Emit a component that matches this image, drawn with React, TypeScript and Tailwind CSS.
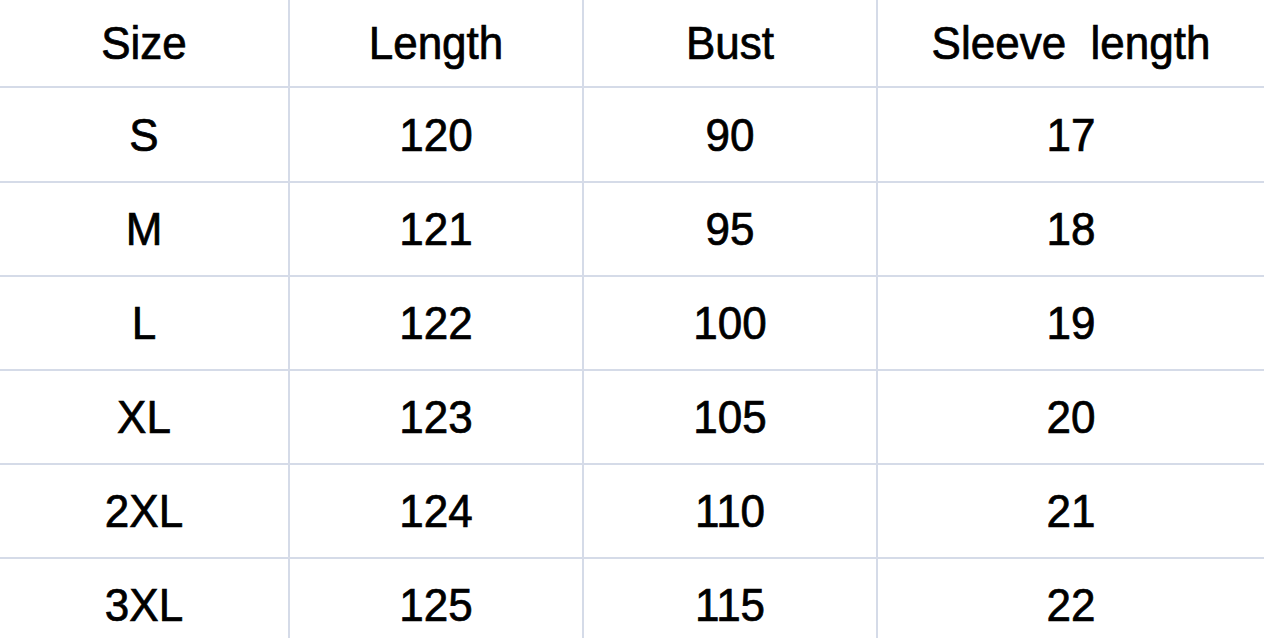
const headers = ["Size", "Length", "Bust", "Sleeve\u00a0 length"];

const rows = [
  ["S", "120", "90", "17"],
  ["M", "121", "95", "18"],
  ["L", "122", "100", "19"],
  ["XL", "123", "105", "20"],
  ["2XL", "124", "110", "21"],
  ["3XL", "125", "115", "22"],
];

export default function App() {
  return (
    <div className="w-[1264px] h-[638px] overflow-hidden bg-white">
      <div
        className="grid grid-cols-[288px_292px_292px_1fr] grid-rows-[86px_93px_92px_92px_92px_92px_92px] gap-[2px] bg-[#d5dbe8] text-black text-[44px] leading-none [-webkit-text-stroke:0.7px_black]"
        style={{ fontFamily: '"Liberation Sans", Arial, sans-serif' }}
      >
        {headers.map((h) => (
          <div key={h} className="flex items-center justify-center bg-white">
            <span className="inline-block scale-y-[1.07]">{h}</span>
          </div>
        ))}
        {rows.map((row) =>
          row.map((cell, i) => (
            <div key={row[0] + i} className="flex items-center justify-center bg-white">
              <span className="inline-block scale-y-[1.07]">{cell}</span>
            </div>
          ))
        )}
      </div>
    </div>
  );
}
